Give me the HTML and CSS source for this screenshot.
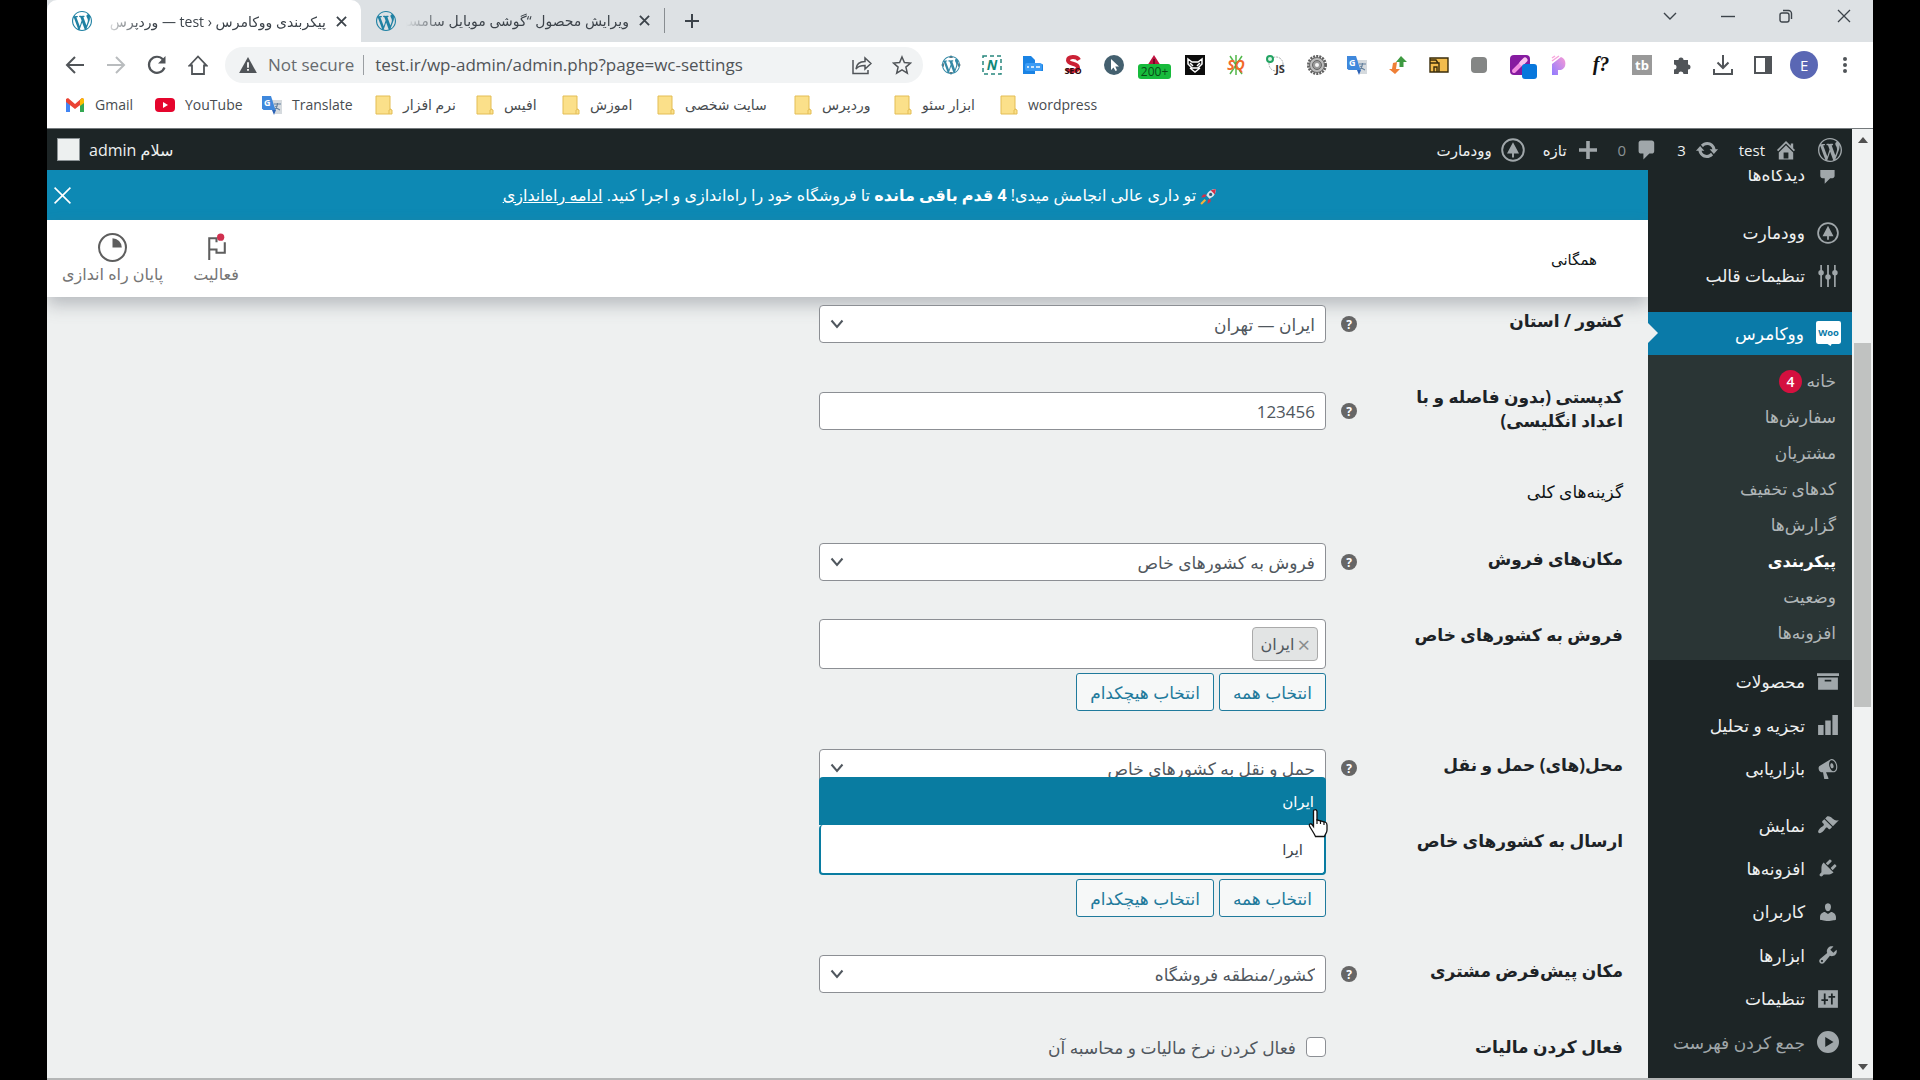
FILE: index.html
```html
<!DOCTYPE html>
<html lang="fa">
<head>
    <meta charset="UTF-8">
    <meta name="viewport" content="width=device-width, initial-scale=1.0">
    <title>پیکربندی ووکامرس ‹ test — وردپرس</title>
    <link rel="stylesheet" href="styles.css">
</head>
<body>
    <svg class="sprite" aria-hidden="true">
        <symbol id="wp" viewBox="0 0 20 20"><path d="M20 10c0-5.51-4.49-10-10-10C4.48 0 0 4.49 0 10c0 5.52 4.48 10 10 10 5.51 0 10-4.48 10-10zM7.78 15.37L4.37 6.22c.55-.02 1.17-.08 1.17-.08.5-.06.44-1.13-.06-1.11 0 0-1.45.11-2.37.11-.18 0-.37 0-.58-.01C4.12 2.69 6.87 1.11 10 1.11c2.33 0 4.45.87 6.05 2.34-.68-.11-1.65.39-1.65 1.58 0 .74.45 1.36.9 2.1.35.61.55 1.36.55 2.46 0 1.49-1.4 5-1.4 5l-3.03-8.37c.54-.02.82-.17.82-.17.5-.05.44-1.25-.06-1.22 0 0-1.44.12-2.38.12-.87 0-2.33-.12-2.33-.12-.5-.03-.56 1.2-.06 1.22l.92.08 1.26 3.41zM17.41 10c.24-.64.74-1.87.43-4.25.7 1.29 1.05 2.71 1.05 4.25 0 3.29-1.73 6.24-4.4 7.78.97-2.59 1.94-5.2 2.92-7.78zM6.1 18.09C3.12 16.65 1.11 13.53 1.11 10c0-1.3.23-2.48.72-3.59C3.25 10.3 4.67 14.2 6.1 18.09zm4.03-6.63l2.58 6.98c-.86.29-1.76.45-2.71.45-.79 0-1.57-.11-2.29-.33.81-2.38 1.62-4.74 2.42-7.1z"/></symbol>
        <symbol id="comment" viewBox="0 0 20 20"><path d="M5 2h9c1.1 0 2 .9 2 2v7c0 1.1-.9 2-2 2h-2l-5 5v-5H5c-1.1 0-2-.9-2-2V4c0-1.1.9-2 2-2z"/></symbol>
        <symbol id="tree" viewBox="0 0 20 20"><circle cx="10" cy="10" r="9" fill="none" stroke="currentColor" stroke-width="1.6"/><path d="M10 3.500l5 9.500h-4.200v3.200H9.200V13H5z"/></symbol>
        <symbol id="close" viewBox="0 0 12 12"><path d="M1 1l10 10M11 1L1 11" fill="none" stroke="currentColor"/></symbol>
        <symbol id="chevron" viewBox="0 0 14 10"><path d="M1.500 1.500L7 8l5.500-6.500" fill="none" stroke="currentColor"/></symbol>
        <symbol id="folder" viewBox="0 0 20 20"><path d="M3 1h14v13l2 1v4H3z" fill="#fbe08a" stroke="#e3bd55"/><path d="M16 19v-4l2-1" fill="none" stroke="#e3bd55"/></symbol>
        <symbol id="gtranslate" viewBox="0 0 20 20"><path d="M9 5h11v14h-7z" fill="#d5dade"/><path d="M12 9h7M15.500 8v1c0 3-2 5-3 6M13.500 11c1 2 3 3.500 4.500 4" fill="none" stroke="#64809d" stroke-width="1.200"/><path d="M0 1h9l4.500 14H1.500L0 13.500z" fill="#3f88dc"/><path d="M10 15h4l-2 5z" fill="#2b62b5"/><text x="2" y="11" font-size="9" font-weight="700" fill="#fff">G</text></symbol>
        <symbol id="help" viewBox="0 0 16 16"><circle cx="8" cy="8" r="8" fill="#666"/><text x="8" y="12.500" font-size="12" font-weight="700" text-anchor="middle" fill="#fff">?</text></symbol>
    </svg>

    <div class="browser">
        <div class="tab-strip">
            <div class="tab tab-active">
                <svg class="favicon"><use href="#wp"/></svg>
                <span class="tab-title">پیکربندی ووکامرس ‹ test — وردپرس</span>
                <button class="tab-close" aria-label="Close tab"><svg><use href="#close"/></svg></button>
            </div>
            <div class="tab">
                <svg class="favicon"><use href="#wp"/></svg>
                <span class="tab-title">ویرایش محصول “گوشی موبایل سامسونگ</span>
                <button class="tab-close" aria-label="Close tab"><svg><use href="#close"/></svg></button>
            </div>
            <button class="new-tab" aria-label="New tab"><svg viewBox="0 0 16 16"><path d="M8 1v14M1 8h14" stroke="currentColor" stroke-width="2"/></svg></button>
            <div class="window-buttons">
                <button aria-label="Search tabs"><svg viewBox="0 0 14 14"><path d="M1 4l6 6 6-6" fill="none" stroke="currentColor" stroke-width="1.400"/></svg></button>
                <button aria-label="Minimize"><svg viewBox="0 0 14 14"><path d="M0 7.500h14" stroke="currentColor" stroke-width="1.400"/></svg></button>
                <button aria-label="Restore"><svg viewBox="0 0 14 14"><rect x="1" y="4" width="9" height="9" rx="2" fill="none" stroke="currentColor" stroke-width="1.400"/><path d="M4 1.500h5.500a3 3 0 0 1 3 3V10" fill="none" stroke="currentColor" stroke-width="1.400"/></svg></button>
                <button aria-label="Close window"><svg viewBox="0 0 14 14"><path d="M1 1l12 12M13 1L1 13" stroke="currentColor" stroke-width="1.300"/></svg></button>
            </div>
        </div>

        <div class="toolbar">
            <div class="nav-buttons">
                <button aria-label="Back"><svg viewBox="0 0 20 20"><path d="M19 10H2M10 2l-8 8 8 8" fill="none" stroke="currentColor" stroke-width="2"/></svg></button>
                <button aria-label="Forward" class="disabled"><svg viewBox="0 0 20 20"><path d="M1 10h17M10 2l8 8-8 8" fill="none" stroke="currentColor" stroke-width="2"/></svg></button>
                <button aria-label="Reload"><svg viewBox="0 0 20 20"><path d="M17.500 12.500A8 8 0 1 1 16 4.500" fill="none" stroke="currentColor" stroke-width="2.200"/><path d="M18.500 1v7.500H11z"/></svg></button>
                <button aria-label="Home"><svg viewBox="0 0 20 20"><path d="M1.500 10.500L10 1.500l8.500 9H16V19H4v-8.500z" fill="none" stroke="currentColor" stroke-width="1.800"/></svg></button>
            </div>
            <div class="address">
                <svg class="warn" viewBox="0 0 20 18"><path d="M10 0l10 18H0z"/><path d="M10 6v6M10 13.500v2" stroke="#fff" stroke-width="2"/></svg>
                <span class="secure">Not secure</span>
                <input class="url" type="text" aria-label="Address" value="test.ir/wp-admin/admin.php?page=wc-settings">
                <button aria-label="Share"><svg viewBox="0 0 20 20"><path d="M1 5v13.500h15V15M4 14c.5-5 4-7.500 9-7.500V3l6 5.500-6 5.500v-3.500c-4 0-7 .5-9 3.500z" fill="none" stroke="currentColor" stroke-width="1.500"/></svg></button>
                <button aria-label="Bookmark"><svg viewBox="0 0 20 20"><path d="M10 2l2.400 5.600 6.100.5-4.600 4 1.400 6L10 14.900l-5.300 3.200 1.400-6-4.600-4 6.100-.5z" fill="none" stroke="currentColor" stroke-width="1.500"/></svg></button>
            </div>
            <div class="extensions">
                <button aria-label="WordPress"><svg viewBox="0 0 20 20"><path d="M10 0l2 3H8zM10 20l2-3H8zM0 10l3-2v4zM20 10l-3-2v4z" fill="#66767d"/><use href="#wp" x="1" y="1" width="18" height="18" fill="#3489a6"/></svg></button>
                <button aria-label="N"><svg viewBox="0 0 20 20"><rect x="1" y="1" width="18" height="18" fill="none" stroke="#27877d" stroke-width="1.500" stroke-dasharray="4 3"/><text x="10" y="15" font-size="14" font-weight="700" font-style="italic" text-anchor="middle" fill="#108879">N</text></svg></button>
                <button aria-label="hreflang"><svg viewBox="0 0 20 20"><path d="M0 1h8l4 4v4h7a1 1 0 0 1 1 1v6H12v3H0z" fill="#1a83e4"/><rect x="2" y="8" width="17" height="8" rx="2" fill="#3b9cf5"/><path d="M4 12h2M8 12h3M13 12h4" stroke="#c8e4fc" stroke-width="2"/></svg></button>
                <button aria-label="SEO"><svg viewBox="0 0 20 20"><path d="M16 5C14 1 5 1 5 5.500c0 4 10 2.500 10 7C15 17 6 17 4 14" fill="none" stroke="#cb2135" stroke-width="4"/><text x="10" y="19" font-size="9" font-weight="700" text-anchor="middle" fill="#2b0a0d">SEO</text></svg></button>
                <button aria-label="Cursor"><svg viewBox="0 0 20 20"><circle cx="10" cy="10" r="10" fill="#44606f"/><path d="M7 4v11l2.500-2.500L11.500 16l1.500-.8-1.700-3.700H15z" fill="#fff"/></svg></button>
                <button aria-label="Alerts" class="with-badge"><svg viewBox="0 0 20 20"><path d="M10 0l7 11H3z" fill="#c01240"/><path d="M10 4v6" stroke="#59081d" stroke-width="1.500"/></svg><span class="count">200+</span></button>
                <button aria-label="Owl"><svg viewBox="0 0 20 20"><path d="M0 0h20v20H0z" fill="#0c0c0c"/><path d="M3 4l4 3h6l4-3v5l-4 4H7L3 9zM5 13l5 4 5-4" fill="none" stroke="#fff" stroke-width="1.500"/><path d="M5 8l3 3M15 8l-3 3" stroke="#fff" stroke-width="1.500"/></svg></button>
                <button aria-label="SQ"><svg viewBox="0 0 20 20"><path d="M10 0v20M4 1l12 18M16 1L4 19" stroke="#51b84a" stroke-width="1.500"/><text x="10" y="15" font-size="14" font-weight="700" font-style="italic" text-anchor="middle" fill="#f2692a">SQ</text></svg></button>
                <button aria-label="JS"><svg viewBox="0 0 20 20"><circle cx="10" cy="9" r="7" fill="none" stroke="#a5a9a9" stroke-dasharray="2 1"/><circle cx="4" cy="4" r="3" fill="#d8f5e4" stroke="#22a362" stroke-width="2"/><text x="14" y="18" font-size="11" font-weight="700" text-anchor="middle" fill="#333">JS</text></svg></button>
                <button aria-label="Gear"><svg viewBox="0 0 20 20"><circle cx="10" cy="10" r="8.500" fill="none" stroke="#606060" stroke-width="3" stroke-dasharray="2 1"/><circle cx="10" cy="10" r="7.500" fill="#bcbcbc" stroke="#6a6a6a"/><circle cx="10" cy="10" r="4.500" fill="#999" stroke="#666"/><circle cx="10" cy="10" r="2" fill="#f4f4f4"/></svg></button>
                <button aria-label="Translate"><svg><use href="#gtranslate"/></svg></button>
                <button aria-label="Arrows"><svg viewBox="0 0 20 20"><path d="M13 1l6 6h-3.500v5h-4V7H8z" fill="#3e9a41"/><path d="M7 19l-6-5h3l1-6 4-1-1 7h4z" fill="#ef7f36"/></svg></button>
                <button aria-label="Folder"><svg viewBox="0 0 20 20"><path d="M1 3h18v14H1zM1 8h9v9M1 5h6l2 3M5 17v-5h3v5" fill="#f2bc4d" stroke="#3a2d0b" stroke-width="1.400"/></svg></button>
                <button aria-label="Square"><svg viewBox="0 0 20 20"><rect x="2" y="2" width="16" height="16" rx="4" fill="#848685"/></svg></button>
                <button aria-label="Picker" class="with-badge"><svg viewBox="0 0 20 20"><rect width="20" height="20" rx="4" fill="#861ba0"/><path d="M4 16l9-9" stroke="#f28ee2" stroke-width="4" stroke-linecap="round"/><path d="M12 8l3-3" stroke="#f9c3ee" stroke-width="5" stroke-linecap="round"/></svg><span class="square"></span></button>
                <button aria-label="P"><svg viewBox="0 0 20 20"><defs><linearGradient id="pg" x1="0" y1="1" x2="1" y2="0"><stop offset="0" stop-color="#8f7bff"/><stop offset="1" stop-color="#f79ad6"/></linearGradient></defs><path d="M2 9l9-7a7 7 0 0 1 0 13H8v5H2z" fill="url(#pg)"/><path d="M2 3l3-2M2 6l7-5" stroke="#f7a5dc" stroke-width="1.500"/></svg></button>
                <button aria-label="WhatFont"><svg viewBox="0 0 20 20"><text x="10" y="16" font-size="20" font-weight="700" font-style="italic" text-anchor="middle" class="serif">f?</text></svg></button>
                <button aria-label="tb"><svg viewBox="0 0 20 20"><path d="M0 0h20v20H0z" fill="#999"/><text x="10" y="15" font-size="13" font-weight="700" text-anchor="middle" fill="#fff">tb</text></svg></button>
                <button aria-label="Extensions"><svg viewBox="0 0 20 20"><path d="M2 5h4.500a2.500 2.500 0 1 1 5 0H16v4.500a2.500 2.500 0 1 1 0 5V19h-4.500a2.500 2.500 0 0 0-5 0H2v-4.500a2.500 2.500 0 0 0 0-5z"/></svg></button>
                <button aria-label="Downloads"><svg viewBox="0 0 20 20"><path d="M10 0v12M4.500 7.500L10 13l5.500-5.500M1 14v5h18v-5" fill="none" stroke="currentColor" stroke-width="2"/></svg></button>
                <button aria-label="Side panel"><svg viewBox="0 0 20 20"><path d="M2 2h16v16H2z" fill="none" stroke="currentColor" stroke-width="2"/><path d="M12 2h6v16h-6z"/></svg></button>
                <button aria-label="Profile" class="profile">E</button>
                <button aria-label="Menu"><svg viewBox="0 0 20 20"><circle cx="10" cy="4" r="2"/><circle cx="10" cy="10" r="2"/><circle cx="10" cy="16" r="2"/></svg></button>
            </div>
        </div>

        <nav class="bookmarks">
            <a href="#"><svg viewBox="0 0 20 20"><path d="M1 4v13h4V9z" fill="#4285f4"/><path d="M19 4v13h-4V9z" fill="#34a853"/><path d="M1 5V4l2-1 7 6 7-6 2 1v3l-9 7-9-7z" fill="#ea4335"/><path d="M15 5l2-2 2 1v4l-4 3z" fill="#fbbc04"/></svg>Gmail</a>
            <a href="#"><svg viewBox="0 0 20 20"><rect y="3" width="20" height="14" rx="4" fill="#e5052d"/><path d="M8 7l5 3-5 3z" fill="#fff"/></svg>YouTube</a>
            <a href="#"><svg><use href="#gtranslate"/></svg>Translate</a>
            <a href="#"><svg><use href="#folder"/></svg>نرم افزار</a>
            <a href="#"><svg><use href="#folder"/></svg>افیس</a>
            <a href="#"><svg><use href="#folder"/></svg>اموزش</a>
            <a href="#"><svg><use href="#folder"/></svg>سایت شخصی</a>
            <a href="#"><svg><use href="#folder"/></svg>وردپرس</a>
            <a href="#"><svg><use href="#folder"/></svg>ابزار سئو</a>
            <a href="#"><svg><use href="#folder"/></svg>wordpress</a>
        </nav>

        <div class="viewport" dir="rtl">
            <div class="scrollbar" aria-hidden="true">
                <span class="arrow-up"></span>
                <span class="thumb"></span>
                <span class="arrow-down"></span>
            </div>

            <div class="page">
                <header class="admin-bar">
                    <a href="#" class="bar-logo" aria-label="WordPress"><svg><use href="#wp"/></svg></a>
                    <a href="#" class="bar-site"><svg viewBox="0 0 20 20"><path d="M16 8.500l1.530 1.530-1.060 1.060L10 4.600l-6.470 6.490-1.060-1.060L10 2.500l4 4v-2h2v4zm-6-2.460l6 5.990V18H4v-5.970zM12 17v-5H8v5h4z"/></svg>test</a>
                    <a href="#" class="bar-updates"><svg viewBox="0 0 20 20"><path d="M10.200 3.280c3.530 0 6.430 2.610 6.920 6h2.080l-3.500 4-3.500-4h2.320c-.45-1.970-2.210-3.450-4.320-3.450-1.450 0-2.730.71-3.540 1.780L4.950 5.660C6.230 4.200 8.110 3.280 10.200 3.280zm-.4 13.440c-3.520 0-6.430-2.610-6.920-6H.8l3.500-4c1.170 1.330 2.330 2.670 3.500 4H5.480c.45 1.970 2.210 3.450 4.320 3.450 1.450 0 2.730-.71 3.540-1.780l1.710 1.950c-1.280 1.460-3.150 2.380-5.250 2.380z"/></svg>3</a>
                    <a href="#" class="bar-comments"><svg><use href="#comment"/></svg>0</a>
                    <a href="#" class="bar-new"><svg viewBox="0 0 20 20"><path d="M17.500 8.500v3h-6v6h-3v-6h-6v-3h6v-6h3v6z"/></svg>تازه</a>
                    <a href="#" class="bar-theme"><svg><use href="#tree"/></svg>وودمارت</a>
                    <a href="#" class="bar-user"><bdi>سلام admin</bdi><span class="avatar"></span></a>
                </header>

                <div class="columns">
                    <nav class="admin-menu">
                        <ul class="menu menu-top">
                            <li><a href="#"><svg><use href="#comment"/></svg>دیدگاه‌ها</a></li>
                            <li class="separator"></li>
                            <li><a href="#"><svg><use href="#tree"/></svg>وودمارت</a></li>
                            <li><a href="#"><svg viewBox="0 0 20 20"><path d="M3 0h1.500v20H3zM9.200 0h1.600v20H9.200zM15.500 0H17v20h-1.500z"/><circle cx="3.700" cy="7" r="2.500"/><circle cx="10" cy="11" r="2.500"/><circle cx="16.300" cy="7" r="2.500"/></svg>تنظیمات قالب</a></li>
                            <li class="separator"></li>
                            <li class="current">
                                <a href="#"><svg viewBox="0 0 24 24"><path d="M2 0h20a2 2 0 0 1 2 2v18a2 2 0 0 1-2 2h-7l-1 2-3-2H2a2 2 0 0 1-2-2V2a2 2 0 0 1 2-2z"/><text x="12" y="14" font-size="9" font-weight="700" text-anchor="middle" fill="#0a7aa8">Woo</text></svg>ووکامرس</a>
                                <ul class="submenu">
                                    <li><a href="#">خانه <span class="bubble">4</span></a></li>
                                    <li><a href="#">سفارش‌ها</a></li>
                                    <li><a href="#">مشتریان</a></li>
                                    <li><a href="#">کدهای تخفیف</a></li>
                                    <li><a href="#">گزارش‌ها</a></li>
                                    <li><a href="#" class="selected">پیکربندی</a></li>
                                    <li><a href="#">وضعیت</a></li>
                                    <li><a href="#">افزونه‌ها</a></li>
                                </ul>
                            </li>
                        </ul>
                        <ul class="menu menu-bottom">
                            <li><a href="#"><svg viewBox="0 0 20 20"><path d="M0 2h20v2.500H0zM1 6h18v11H1zM7 8v1.500h6V8z" fill-rule="evenodd"/></svg>محصولات</a></li>
                            <li><a href="#"><svg viewBox="0 0 20 20"><path d="M1 10h5v9H1zM7.500 6h5v13h-5zM14 1h5v18h-5z"/></svg>تجزیه و تحلیل</a></li>
                            <li><a href="#"><svg viewBox="0 0 20 20"><path d="M18.150 5.940c.46 1.620.38 3.220-.02 4.480-.42 1.280-1.260 2.180-2.300 2.480-.16.060-.26.060-.4.060-.06.020-.12.020-.18.020-.06.020-.14.020-.22.020h-6.800l2.220 5.500c.02.140-.06.260-.14.340-.08.100-.24.160-.34.160H6.950c-.1 0-.26-.06-.34-.16-.08-.08-.16-.2-.14-.34l-1-5.500H4.250l-.02-.02c-.5.060-1.080-.18-1.540-.62s-.88-1.080-1.060-1.880c-.24-.8-.2-1.560-.02-2.200.18-.62.58-1.080 1.060-1.300l.02-.02 9-5.400c.1-.06.180-.1.240-.16.060-.04.140-.08.240-.12.160-.08.280-.12.500-.18 1.040-.3 2.240.1 3.220.98s1.840 2.240 2.260 3.860zm-2.580 5.980h-.02c.4-.1.740-.34 1.040-.7.580-.7.860-1.760.860-3.040 0-.64-.1-1.300-.28-1.980-.34-1.360-1.020-2.500-1.780-3.240s-1.680-1.100-2.460-.88c-.82.220-1.400.960-1.700 2-.32 1.040-.28 2.360.060 3.720.38 1.360 1 2.500 1.800 3.240.78.740 1.620 1.100 2.480.88zm-2.540-7.080c.22-.04.42-.02.62.04.38.160.76.480 1.020 1s.42 1.200.42 1.780c0 .3-.04.560-.12.800-.18.480-.44.840-.86.940-.34.100-.8-.06-1.140-.4s-.64-.86-.78-1.500c-.18-.62-.12-1.240.02-1.720s.48-.84.82-.94z"/></svg>بازاریابی</a></li>
                            <li class="separator"></li>
                            <li><a href="#"><svg viewBox="0 0 20 20"><path d="M14.480 11.060L7.410 3.990l1.500-1.500c.5-.56 2.300-.47 3.510.32 1.210.8 1.430 1.280 2.910 2.100 1.180.64 2.450 1.260 4.450.85zm-.71.71L6.700 4.700 4.930 6.470c-.39.39-.39 1.020 0 1.410l1.060 1.060c.39.39.39 1.030 0 1.420-.6.6-1.430 1.110-2.210 1.690-.35.26-.7.53-1.010.84C1.430 14.230.4 16.080 1.400 17.070c.99 1 2.840-.03 4.180-1.360.31-.31.58-.66.85-1.020.57-.78 1.080-1.610 1.690-2.210.39-.39 1.020-.39 1.410 0l1.060 1.060c.39.39 1.020.39 1.410 0z"/></svg>نمایش</a></li>
                            <li><a href="#"><svg viewBox="0 0 20 20"><path d="M13.110 4.360L9.870 7.600 8 5.730l3.240-3.240c.35-.34 1.050-.2 1.560.32.52.51.66 1.210.31 1.550zm-8 1.770l.91-1.120 9.010 9.010-1.190.84c-.71.71-2.630 1.160-3.820 1.160H6.140L4.900 17.260c-.59.59-1.540.59-2.120 0-.59-.58-.59-1.530 0-2.120l1.240-1.240v-3.880c0-1.130.4-3.190 1.090-3.890zm7.260 3.970l3.240-3.240c.34-.35 1.040-.21 1.550.31.52.51.66 1.210.31 1.550l-3.240 3.250z"/></svg>افزونه‌ها</a></li>
                            <li><a href="#"><svg viewBox="0 0 20 20"><path d="M10 9.250c-2.270 0-2.730-3.440-2.730-3.440C7 4.020 7.820 2 9.970 2c2.160 0 2.980 2.020 2.710 3.810 0 0-.41 3.440-2.680 3.440zm0 2.570L12.720 10c2.390 0 4.520 2.330 4.520 4.530v2.490s-3.650 1.130-7.240 1.130c-3.650 0-7.240-1.130-7.240-1.130v-2.490c0-2.250 1.940-4.480 4.470-4.480z"/></svg>کاربران</a></li>
                            <li><a href="#"><svg viewBox="0 0 20 20"><path d="M16.680 9.770c-1.340 1.340-3.300 1.670-4.950.99l-5.410 6.520c-.99.99-2.590.99-3.580 0s-.99-2.590 0-3.570l6.520-5.420c-.68-1.650-.35-3.610.99-4.950 1.280-1.280 3.120-1.620 4.720-1.060l-2.890 2.890 2.820 2.820 2.860-2.870c.53 1.580.18 3.390-1.080 4.650zM3.810 16.210c.4.39 1.040.39 1.430 0 .4-.4.4-1.040 0-1.430-.39-.4-1.030-.4-1.430 0-.39.39-.39 1.030 0 1.430z"/></svg>ابزارها</a></li>
                            <li><a href="#"><svg viewBox="0 0 20 20"><path d="M1 2h18v16H1z"/><path d="M7 5v10M4 11h6M13.500 5v10M10.500 8h6" stroke="#1d2526" stroke-width="1.600"/></svg>تنظیمات</a></li>
                            <li class="collapse"><a href="#"><svg viewBox="0 0 20 20"><path d="M10 0a10 10 0 1 1 0 20 10 10 0 0 1 0-20zM7.500 5.500v9L15 10z" fill-rule="evenodd"/></svg>جمع کردن فهرست</a></li>
                        </ul>
                    </nav>

                    <main class="main">
                        <div class="notice">
                            <p><svg class="rocket" viewBox="0 0 16 16"><path d="M15 1c-5 0-8 3-9 6l3 3c3-1 6-4 6-9z" fill="#d9e6ec"/><path d="M10 2l4 4 1-5z" fill="#d4304a"/><path d="M6 6H3L1 9l4-.5zM10 10v3l-3 2 .500-4z" fill="#d4304a"/><path d="M5 11l-4 4" stroke="#f5b13c" stroke-width="2"/><circle cx="10" cy="6" r="1.500" fill="#2a5a78"/></svg> تو داری عالی انجامش میدی! <strong>4 قدم باقی مانده</strong> تا فروشگاه خود را راه‌اندازی و اجرا کنید. <a href="#">ادامه راه‌اندازی</a></p>
                            <button aria-label="بستن"><svg><use href="#close"/></svg></button>
                        </div>
                        <div class="page-header">
                            <h1>همگانی</h1>
                            <div class="panel-tabs">
                                <button><svg viewBox="0 0 28 28"><path d="M7 26V5h7v4M7 16h7v3h8V9" fill="none" stroke="currentColor" stroke-width="2"/><circle cx="18" cy="4" r="3.500" fill="#d0304f"/></svg>فعالیت</button>
                                <button><svg viewBox="0 0 28 28"><circle cx="14" cy="14" r="13" fill="none" stroke="currentColor" stroke-width="2"/><path d="M14 5a9 9 0 0 1 9 9h-9z"/></svg>پایان راه اندازی</button>
                            </div>
                        </div>

                        <form class="settings">
                            <div class="row">
                                <label for="country">کشور / استان</label>
                                <svg class="help"><use href="#help"/></svg>
                                <div class="field"><select id="country"><option>ایران — تهران</option></select><svg class="caret"><use href="#chevron"/></svg></div>
                            </div>
                            <div class="row row-middle">
                                <label for="postcode">کدپستی (بدون فاصله و با اعداد انگلیسی)</label>
                                <svg class="help"><use href="#help"/></svg>
                                <div class="field"><input id="postcode" type="text" value="123456"></div>
                            </div>
                            <h2>گزینه‌های کلی</h2>
                            <div class="row">
                                <label for="selling">مکان‌های فروش</label>
                                <svg class="help"><use href="#help"/></svg>
                                <div class="field"><select id="selling"><option>فروش به کشورهای خاص</option></select><svg class="caret"><use href="#chevron"/></svg></div>
                            </div>
                            <div class="row">
                                <label for="sell-to">فروش به کشورهای خاص</label>
                                <div class="field">
                                    <div class="multi">
                                        <span class="tag"><button type="button" aria-label="حذف">×</button>ایران</span>
                                        <input id="sell-to" type="text">
                                    </div>
                                    <div class="actions">
                                        <button type="button">انتخاب همه</button>
                                        <button type="button">انتخاب هیچکدام</button>
                                    </div>
                                </div>
                            </div>
                            <div class="row">
                                <label for="shipping">محل(های) حمل و نقل</label>
                                <svg class="help"><use href="#help"/></svg>
                                <div class="field"><select id="shipping"><option>حمل و نقل به کشورهای خاص</option></select><svg class="caret"><use href="#chevron"/></svg></div>
                            </div>
                            <div class="row">
                                <label for="ship-to">ارسال به کشورهای خاص</label>
                                <div class="field">
                                    <div class="multi multi-open">
                                        <input id="ship-to" type="text" value="ایرا">
                                        <ul class="results">
                                            <li>ایران</li>
                                        </ul>
                                        <svg class="pointer" viewBox="0 0 20 30"><path d="M6 2c1.500-1 3 0 3 1.500V12l8 2c1.500.5 2 1.500 2 3v5c0 3-2 4-2.500 6.500h-9C6 25 3 21 1.500 18c-.8-2 1-3 2.500-1.500l1.500 2V3z" fill="#fff" stroke="#111" stroke-width="1.300"/><path d="M9 11v5M12.500 12.500V16M16 13.500V17" stroke="#111" stroke-width="1.200"/></svg>
                                    </div>
                                    <div class="actions">
                                        <button type="button">انتخاب همه</button>
                                        <button type="button">انتخاب هیچکدام</button>
                                    </div>
                                </div>
                            </div>
                            <div class="row">
                                <label for="default-location">مکان پیش‌فرض مشتری</label>
                                <svg class="help"><use href="#help"/></svg>
                                <div class="field"><select id="default-location"><option>کشور/منطقه فروشگاه</option></select><svg class="caret"><use href="#chevron"/></svg></div>
                            </div>
                            <div class="row">
                                <span class="row-title">فعال کردن مالیات</span>
                                <div class="field check">
                                    <input id="taxes" type="checkbox">
                                    <label for="taxes">فعال کردن نرخ مالیات و محاسبه آن</label>
                                </div>
                            </div>
                        </form>
                    </main>
                </div>
            </div>
        </div>
    </div>
</body>
</html>
```
FILE: styles.css
```css
* {
    margin: 0;
    padding: 0;
    box-sizing: border-box;
}

body {
    font-family: "Open Sans", "DejaVu Sans", sans-serif;
    font-size: 15px;
    background: #000;
    color: #3c434a;
}

button, input, select {
    font: inherit;
    color: inherit;
    background: none;
    border: none;
}

a {
    color: inherit;
    text-decoration: none;
}

ul {
    list-style: none;
}

svg {
    width: 20px;
    height: 20px;
    flex-shrink: 0;
    fill: currentColor;
}

.sprite {
    display: none;
}

.serif {
    font-family: "Liberation Serif", serif;
    fill: #111;
}

.browser {
    display: flex;
    flex-direction: column;
    height: 100vh;
    margin: 0 47px;
    overflow: hidden;
    background: #fff;
    border-bottom: 2px solid #b4b6b6;
}

/* Tabs */
.tab-strip {
    display: flex;
    height: 42px;
    padding-bottom: 1px;
    background: #dde1e4;
}

.tab {
    display: flex;
    align-items: center;
    gap: 10px;
    width: 303px;
    padding: 0 14px 0 15px;
}

.tab-active {
    width: 314px;
    padding: 0 14px 0 25px;
    margin-bottom: -1px;
    background: #fff;
    border-radius: 10px 10px 0 0;
}

.favicon {
    color: #1f81a3;
}

.tab-title {
    flex: 1;
    min-width: 0;
    font-size: 14px;
    direction: rtl;
    white-space: nowrap;
    overflow: hidden;
    mask-image: linear-gradient(to right, transparent, #000 40px);
}

.tab-close svg {
    display: block;
    width: 11px;
    height: 11px;
    stroke-width: 2;
}

.new-tab {
    display: flex;
    align-items: center;
    padding-left: 19px;
    margin: 8px 0;
    border-left: 1px solid #888d91;
}

.new-tab svg {
    width: 16px;
    height: 16px;
}

.window-buttons {
    display: flex;
    margin-left: auto;
    padding-bottom: 8px;
}

.window-buttons button {
    width: 58px;
}

.window-buttons svg {
    width: 14px;
    height: 14px;
}

/* Toolbar */
.toolbar {
    display: flex;
    align-items: center;
    height: 45px;
    color: #505458;
}

.toolbar button {
    display: grid;
    place-items: center;
}

.nav-buttons {
    display: flex;
    padding-left: 7px;
}

.nav-buttons button {
    width: 41px;
}

.nav-buttons .disabled {
    color: #b9bcbe;
}

.address {
    display: flex;
    align-items: center;
    flex: 1;
    height: 36px;
    margin-left: 7px;
    padding: 0 1px 0 14px;
    border-radius: 18px;
    background: #f1f3f4;
    font-size: 17px;
}

.address button {
    width: 40px;
}

.address .warn {
    width: 18px;
    height: 16px;
}

.secure {
    margin-left: 11px;
    padding-right: 9px;
    border-right: 1px solid #9a9ea2;
    line-height: 20px;
    color: #666a6e;
}

.url {
    flex: 1;
    min-width: 0;
    padding-left: 11px;
}

.extensions {
    display: grid;
    grid-template-columns: repeat(23, 1fr);
    flex: 0 0 934px;
    margin: 0 8px;
}

.with-badge {
    position: relative;
}

.count {
    position: absolute;
    top: 13px;
    left: 4px;
    width: 33px;
    height: 15px;
    border-radius: 3px;
    background: #17bb3c;
    color: #084a16;
    font-size: 12px;
    line-height: 15px;
}

.square {
    position: absolute;
    top: 13px;
    left: 22px;
    width: 15px;
    height: 15px;
    border-radius: 3px;
    background: #0877dc;
}

.toolbar .profile {
    justify-self: center;
    width: 28px;
    height: 28px;
    border-radius: 50%;
    background: #5a67b4;
    color: #fff;
}

/* Bookmarks */
.bookmarks {
    display: grid;
    grid-template-columns: 90px 107px 111px 101px 86px 95px 137px 100px 106px auto;
    height: 42px;
    padding: 0 18px 6px;
    border-bottom: 1px solid #74797c;
    font-size: 14px;
    color: #484c50;
}

.bookmarks a {
    display: flex;
    align-items: center;
    gap: 10px;
    white-space: nowrap;
}

/* Page frame */
.viewport {
    display: flex;
    flex: 1;
    min-height: 0;
}

.scrollbar {
    display: flex;
    flex-direction: column;
    width: 21px;
    padding: 8px 2px;
    background: #f0f2f2;
}

.arrow-up, .arrow-down {
    align-self: center;
    border: 5px solid transparent;
}

.arrow-up {
    border-top: 0;
    border-bottom: 6px solid #505050;
}

.arrow-down {
    border-bottom: 0;
    border-top: 6px solid #505050;
    margin-top: auto;
}

.thumb {
    height: 39%;
    margin-top: 200px;
    background: #c0c2c1;
}

.page {
    display: flex;
    flex-direction: column;
    flex: 1;
    min-width: 0;
}

/* Admin bar */
.admin-bar {
    display: flex;
    align-items: center;
    height: 41px;
    padding: 0 10px;
    background: #1d2526;
    color: #eef0f0;
}

.admin-bar a {
    display: flex;
    align-items: center;
    gap: 9px;
    margin-left: 20px;
}

.admin-bar svg {
    width: 24px;
    height: 24px;
    color: #a0a7aa;
}

.admin-bar .bar-updates, .admin-bar .bar-comments, .admin-bar .bar-new {
    margin-left: 18px;
}

.admin-bar .bar-comments {
    color: #8b9295;
}

.admin-bar .bar-user {
    margin: 0 auto 0 0;
    font-size: 16px;
}

.avatar {
    width: 23px;
    height: 23px;
    border: 1px solid #8b9295;
    background: #edf0f0;
}

/* Admin menu */
.columns {
    display: flex;
    flex: 1;
    min-height: 0;
}

.admin-menu {
    display: flex;
    flex-direction: column;
    width: 204px;
    overflow: hidden;
    background: #1d2526;
    color: #eef0f0;
    font-size: 17px;
    white-space: nowrap;
}

.menu-top {
    margin-top: -17px;
}

.menu-bottom {
    display: flex;
    flex-direction: column;
    flex: 1;
    padding-bottom: 14px;
}

.menu-bottom li {
    display: flex;
    flex: 1;
}

.menu > li > a {
    display: flex;
    align-items: center;
    gap: 12px;
    width: 100%;
    min-height: 43px;
    padding-right: 13px;
}

.menu svg {
    width: 22px;
    height: 22px;
    color: #a0a7aa;
}

.menu .separator {
    flex: 0 0 13px;
    height: 15px;
}

.current {
    position: relative;
}

.menu > .current > a {
    background: #0a7aa8;
    color: #fff;
}

.current > a svg {
    width: 25px;
    height: 25px;
    margin-right: -2px;
    color: #fff;
}

.current::before {
    content: "";
    position: absolute;
    top: 11px;
    left: 0;
    border: 10px solid transparent;
    border-left-color: #eef0f0;
    border-right: 0;
}

.submenu {
    padding: 8px 16px 9px;
    background: #2a3535;
    color: #b0b6b8;
    line-height: 36px;
}

.submenu li {
    height: 36px;
}

.submenu .selected {
    color: #fff;
    font-size: 16px;
    font-weight: 700;
}

.bubble {
    display: inline-block;
    width: 23px;
    border-radius: 50%;
    background: #d4103f;
    color: #fff;
    font-size: 14px;
    font-weight: 600;
    line-height: 23px;
    text-align: center;
}

.collapse {
    color: #a0a7aa;
}

/* Main column */
.main {
    flex: 1;
    min-width: 0;
    overflow: hidden;
    background: #eef0f0;
}

.notice {
    display: flex;
    align-items: center;
    height: 50px;
    padding-left: 6px;
    background: #0d89b4;
    color: #fff;
    font-size: 16px;
}

.notice p {
    flex: 1;
    text-align: center;
}

.notice a {
    text-decoration: underline;
}

.notice .rocket {
    width: 17px;
    height: 17px;
    vertical-align: middle;
}

.notice button svg {
    display: block;
    width: 19px;
    height: 19px;
}

.page-header {
    position: relative;
    display: flex;
    align-items: center;
    justify-content: space-between;
    height: 77px;
    padding: 0 51px 0 15px;
    background: #fff;
    box-shadow: 0 8px 16px rgba(85, 93, 102, 0.35);
}

.page-header h1 {
    font-size: 15px;
    font-weight: 400;
    color: #101517;
}

.panel-tabs {
    display: flex;
    gap: 30px;
}

.panel-tabs button {
    display: flex;
    flex-direction: column;
    align-items: center;
    gap: 1px;
    font-size: 16px;
    color: #757575;
}

.panel-tabs svg {
    width: 29px;
    height: 29px;
    color: #5e5e5e;
}

/* Settings form */
.settings {
    margin-top: -11px;
    padding-right: 25px;
    font-size: 17px;
}

.row {
    display: grid;
    grid-template-columns: 230px 67px minmax(0, 507px);
    padding: 19px 0;
}

.row > label, .row-title {
    padding: 4px 0 8px;
    font-size: 17px;
    line-height: 24px;
    font-weight: 700;
    color: #1d2327;
}

.row-middle {
    align-items: center;
    padding: 19px 0;
}

.help {
    width: 16px;
    height: 16px;
    margin: 11px 36px 0 0;
}

.row-middle .help {
    margin-top: 0;
}

.field {
    position: relative;
    grid-column: 3;
}

.field select, .field > input[type="text"] {
    display: block;
    width: 100%;
    height: 38px;
    padding: 0 10px;
    appearance: none;
    background: #fff;
    border: 1px solid #8c8f94;
    border-radius: 4px;
    color: #50575e;
}

.caret {
    position: absolute;
    top: 14px;
    left: 11px;
    width: 14px;
    height: 10px;
    color: #50575e;
    stroke-width: 2;
}

.settings h2 {
    font-size: 17px;
    font-weight: 400;
    line-height: 64px;
    color: #101517;
}

.multi {
    position: relative;
    display: flex;
    align-items: center;
    height: 50px;
    padding: 0 7px;
    background: #fff;
    border: 1px solid #8c8f94;
    border-radius: 4px;
}

.multi input {
    flex: 1;
    min-width: 0;
    height: 100%;
    outline: none;
}

.multi-open {
    padding: 0 21px;
    border: 2px solid #097ca1;
    border-top: 0;
    font-size: 15px;
}

.tag {
    display: flex;
    align-items: center;
    gap: 3px;
    height: 34px;
    padding: 0 7px;
    background: #e2e4e4;
    border: 1px solid #aaa;
    border-radius: 4px;
    color: #50575e;
    font-size: 16px;
}

.tag button {
    font-size: 22px;
    line-height: 20px;
    color: #8a8d8d;
}

.results {
    position: absolute;
    right: -2px;
    bottom: 100%;
    left: -2px;
    border-radius: 4px 4px 0 0;
    background: #097ca1;
    color: #fff;
}

.results li {
    padding: 0 12px;
    line-height: 48px;
}

.pointer {
    position: absolute;
    top: -17px;
    right: -4px;
    width: 20px;
    height: 30px;
}

.actions {
    display: flex;
    gap: 5px;
    margin-top: 4px;
}

.actions button {
    height: 38px;
    padding: 0 13px;
    background: #f6f8f8;
    border: 1px solid #1f7a9c;
    border-radius: 3px;
    color: #1f7a9c;
    font-size: 17px;
}

.check {
    display: flex;
    align-items: center;
    gap: 10px;
    height: 32px;
    color: #50575e;
}

.check input {
    width: 20px;
    height: 20px;
    appearance: none;
    background: #fff;
    border: 1px solid #8c8f94;
    border-radius: 4px;
}
```
